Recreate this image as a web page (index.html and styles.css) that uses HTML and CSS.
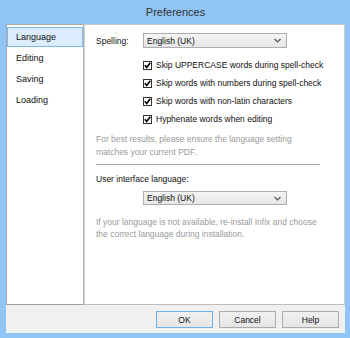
FILE: index.html
```html
<!DOCTYPE html>
<html>
<head>
<meta charset="utf-8">
<link rel="stylesheet" href="styles.css">
</head>
<body>
<div class="window">
  <div class="titlebar">Preferences</div>
  <div class="client">
    <div class="main">
      <ul class="sidebar">
        <li class="item selected">Language</li>
        <li class="item">Editing</li>
        <li class="item">Saving</li>
        <li class="item">Loading</li>
      </ul>
      <div class="content">
        <div class="field-row">
          <span class="label">Spelling:</span>
          <div class="select"><span>English (UK)</span><svg class="chev" width="7" height="5" viewBox="0 0 7 5"><path d="M0.5 1 L3.5 4 L6.5 1" fill="none" stroke="#555" stroke-width="1.2"/></svg></div>
        </div>
        <div class="checks">
          <div class="check"><svg class="box" width="9" height="9" viewBox="0 0 9 9"><rect x="0.5" y="0.5" width="8" height="8" fill="#fff" stroke="#333"/><path d="M1.8 4.3 L3.7 6.4 L7.3 1.8" fill="none" stroke="#000" stroke-width="1.6"/></svg><span>Skip UPPERCASE words during spell-check</span></div>
          <div class="check"><svg class="box" width="9" height="9" viewBox="0 0 9 9"><rect x="0.5" y="0.5" width="8" height="8" fill="#fff" stroke="#333"/><path d="M1.8 4.3 L3.7 6.4 L7.3 1.8" fill="none" stroke="#000" stroke-width="1.6"/></svg><span>Skip words with numbers during spell-check</span></div>
          <div class="check"><svg class="box" width="9" height="9" viewBox="0 0 9 9"><rect x="0.5" y="0.5" width="8" height="8" fill="#fff" stroke="#333"/><path d="M1.8 4.3 L3.7 6.4 L7.3 1.8" fill="none" stroke="#000" stroke-width="1.6"/></svg><span>Skip words with non-latin characters</span></div>
          <div class="check"><svg class="box" width="9" height="9" viewBox="0 0 9 9"><rect x="0.5" y="0.5" width="8" height="8" fill="#fff" stroke="#333"/><path d="M1.8 4.3 L3.7 6.4 L7.3 1.8" fill="none" stroke="#000" stroke-width="1.6"/></svg><span>Hyphenate words when editing</span></div>
        </div>
        <p class="note note1">For best results, please ensure the language setting<br>matches your current PDF.</p>
        <div class="sep"></div>
        <div class="label2">User interface language:</div>
        <div class="select select2"><span>English (UK)</span><svg class="chev" width="7" height="5" viewBox="0 0 7 5"><path d="M0.5 1 L3.5 4 L6.5 1" fill="none" stroke="#555" stroke-width="1.2"/></svg></div>
        <p class="note note2">If your language is not available, re-install Infix and choose<br>the correct language during installation.</p>
      </div>
    </div>
    <div class="footer">
      <button class="btn default">OK</button>
      <button class="btn">Cancel</button>
      <button class="btn">Help</button>
    </div>
  </div>
</div>
</body>
</html>
```

FILE: styles.css
```css
html, body {
  margin: 0;
  padding: 0;
}
body {
  width: 350px;
  height: 338px;
  background: #8fc4f4;
  font-family: "Liberation Sans", Arial, sans-serif;
  overflow: hidden;
}
.window {
  display: flex;
  flex-direction: column;
  width: 350px;
  height: 338px;
  box-sizing: border-box;
  padding: 0 5px 5px 6px;
}
.titlebar {
  height: 24px;
  line-height: 24px;
  text-align: center;
  font-size: 11px;
  color: #333;
}
.client {
  flex: 1;
  display: flex;
  flex-direction: column;
  background: #f0f0f0;
}
.main {
  display: flex;
  height: 281px;
}
.sidebar {
  list-style: none;
  margin: 0;
  padding: 2px 0 0 0;
  width: 78px;
  box-sizing: border-box;
  background: #fff;
  border: 1px solid #a8a8a8;
  border-right-color: #b4b4b4;
  border-bottom-color: #a0a0a0;
}
.item {
  height: 21px;
  line-height: 21px;
  box-sizing: border-box;
  padding-left: 9px;
  font-size: 9px;
  color: #111;
}
.item.selected {
  height: 20px;
  line-height: 18px;
  margin-bottom: 1px;
  background: #dcecfc;
  border: 1px solid #80b9ee;
  padding-left: 8px;
}
.content {
  flex: 1;
  background: #fff;
  border: 1px solid #c8c8c8;
  border-left-color: #d0d0d0;
  border-bottom-color: #bcbcbc;
  margin-left: 0;
  padding: 8px 20px 0 11px;
  font-size: 8.5px;
  color: #111;
}
.field-row {
  display: flex;
  align-items: center;
  height: 15px;
}
.label {
  width: 47px;
}
.select {
  width: 144px;
  height: 15px;
  box-sizing: border-box;
  border: 1px solid #adadad;
  background: linear-gradient(#f4f4f4, #e6e6e6);
  display: flex;
  align-items: center;
  justify-content: space-between;
  padding: 0 5px 0 3px;
}
.chev {
  display: block;
}
.checks {
  margin: 8px 0 0 47px;
}
.check {
  display: flex;
  align-items: center;
  height: 18px;
}
.box {
  margin-right: 4px;
  flex: none;
}
.note {
  margin: 5px 0 0 0;
  line-height: 12.5px;
  color: #9a9a9a;
}
.sep {
  width: 224px;
  height: 1px;
  background: #a8a8a8;
  margin-top: 6px;
}
.label2 {
  margin-top: 8px;
  line-height: 12px;
}
.select2 {
  margin: 6px 0 0 47px;
  height: 14px;
}
.note2 {
  margin-top: 11px;
  line-height: 12px;
}
.footer {
  flex: 1;
  display: flex;
  justify-content: flex-end;
  align-items: flex-start;
  gap: 6px;
  padding: 6px 6px 0 0;
}
.btn {
  width: 57px;
  height: 17px;
  margin: 0;
  padding: 0;
  box-sizing: border-box;
  border: 1px solid #acacac;
  background: linear-gradient(#f0f0f0, #e5e5e5);
  font-family: "Liberation Sans", Arial, sans-serif;
  font-size: 8.5px;
  color: #111;
}
.btn.default {
  border-color: #6fb0ea;
}
```
